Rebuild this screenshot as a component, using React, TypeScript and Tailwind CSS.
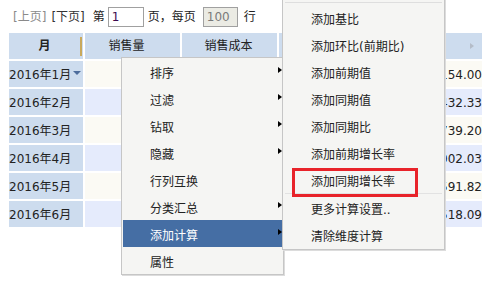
const rows = [
  { month: "2016年1月", total: "23154.00" },
  { month: "2016年2月", total: "21432.33" },
  { month: "2016年3月", total: "19739.20" },
  { month: "2016年4月", total: "22002.03" },
  { month: "2016年5月", total: "20591.82" },
  { month: "2016年6月", total: "24518.09" },
];

const mainMenu = [
  { label: "排序", sub: true },
  { label: "过滤", sub: true },
  { label: "钻取", sub: true },
  { label: "隐藏", sub: true },
  { label: "行列互换", sub: false },
  { label: "分类汇总", sub: true },
  { label: "添加计算", sub: true, active: true },
  { label: "属性", sub: false },
];

const calcMenu = [
  "添加基比",
  "添加环比(前期比)",
  "添加前期值",
  "添加同期值",
  "添加同期比",
  "添加前期增长率",
  "添加同期增长率",
];

const Arrow = () => (
  <span className="absolute right-0 top-[9px] h-0 w-0 border-y-[3.5px] border-l-[4px] border-y-transparent border-l-black" />
);

const MenuItem = ({ label, sub, active }: { label: string; sub?: boolean; active?: boolean }) => (
  <div
    className={`relative flex h-[27px] items-center pl-[27px] pt-[4px] ${
      active ? "bg-[#456ea4] text-white" : "text-[#222]"
    }`}
  >
    {label}
    {sub && <Arrow />}
  </div>
);

export default function App() {
  return (
    <div className="relative h-[293px] w-[503px] overflow-hidden bg-white text-[12px] text-[#222] font-['DejaVu_Sans','Noto_Sans_CJK_SC',sans-serif]">
      {/* 分页 */}
      <div className="mt-[7px] flex h-[20px] items-center pl-[13px]">
        <span className="text-[#8a8a8a]">[上页]</span>
        <span className="ml-[5px] text-[#333]">[下页]</span>
        <span className="ml-[8px]">第</span>
        <div className="ml-[3px] flex h-[20px] w-[36px] items-center border border-[#a0a0a0] bg-white pl-[3px] text-[#3b0a4f]">
          1
        </div>
        <span className="ml-[4px]">页，每页</span>
        <div className="ml-[7px] flex h-[20px] w-[35px] items-center border border-[#a0a0a0] bg-[#ebebe4] pl-[3px] text-[#7a7a7a]">
          100
        </div>
        <span className="ml-[6px]">行</span>
      </div>

      {/* 表格 */}
      <div className="ml-[9px] mt-[6px] flex w-[473px] flex-col gap-[2px]">
        <div className="flex h-[26px] gap-[2px]">
          <div className="flex w-[74px] items-center bg-[#cddcee]">
            <span className="flex-1 text-center font-bold">月</span>
            <span className="mr-[1px] h-[19px] w-[2px] bg-[#c9a95c]" />
          </div>
          <div className="flex w-[95px] items-center justify-center bg-[#cddcee] pr-[12px]">销售量</div>
          <div className="flex w-[95px] items-center justify-center bg-[#cddcee] pr-[2px]">销售成本</div>
          <div className="w-[100px] bg-[#cddcee]" />
          <div className="flex flex-1 items-center justify-end bg-[#cddcee] pr-[8px]">
            <span className="h-0 w-0 border-y-[3.5px] border-l-[4px] border-y-transparent border-l-[#b4bcc8]" />
          </div>
        </div>
        {rows.map((r, i) => {
          const bg = i % 2 === 0 ? "bg-[#fbfaf4]" : "bg-[#e5ebfc]";
          return (
            <div key={r.month} className="flex h-[26px] gap-[2px]">
              <div className="relative flex w-[74px] items-center bg-[#cddcee] pt-[2px]">
                {r.month}
                {i === 0 && (
                  <span className="absolute left-[64px] top-[10px] h-0 w-0 border-x-[4px] border-t-[4px] border-x-transparent border-t-[#4d6c9c]" />
                )}
              </div>
              <div className={`w-[95px] ${bg}`} />
              <div className={`w-[95px] ${bg}`} />
              <div className={`w-[100px] ${bg}`} />
              <div className={`flex flex-1 items-center justify-end pt-[2px] ${bg}`}>{r.total}</div>
            </div>
          );
        })}
      </div>

      {/* 右键菜单 */}
      <div className="absolute left-[121px] top-[57px] w-[163px] border border-[#c6c6c6] bg-[#f5f5f3] px-px shadow-[1px_1px_0_#dcdcdc]">
        {mainMenu.map((m) => (
          <MenuItem key={m.label} label={m.label} sub={m.sub} active={m.active} />
        ))}
      </div>

      {/* 子菜单 */}
      <div className="absolute left-[282px] top-[-10px] w-[163px] border border-[#c6c6c6] bg-[#f5f5f3] px-px pb-px shadow-[1px_1px_0_#dcdcdc]">
        <div className="mx-px mt-[11px] h-px bg-[#dedede]" />
        <div className="mt-px">
          {calcMenu.map((label) => (
            <MenuItem key={label} label={label} />
          ))}
        </div>
        <div className="mx-px h-px bg-[#e2e2e2]" />
        <MenuItem label="更多计算设置.." />
        <MenuItem label="清除维度计算" />
      </div>

      {/* 标注 */}
      <div className="absolute left-[292px] top-[168px] h-[29px] w-[126px] border-[3px] border-[#e8232a]" />
    </div>
  );
}
